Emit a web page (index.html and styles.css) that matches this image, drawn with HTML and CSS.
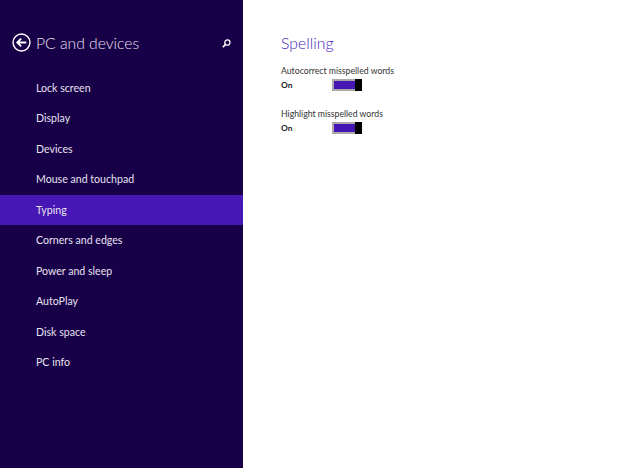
FILE: index.html
```html
<!DOCTYPE html>
<html lang="en">
<head>
    <meta charset="UTF-8">
    <title>PC and devices</title>
    <link rel="stylesheet" href="styles.css">
</head>
<body>
    <nav class="sidebar">
        <header class="side-head">
            <svg class="back" width="19" height="19" viewBox="0 0 20 20">
                <circle cx="10" cy="10" r="8.9" fill="none" stroke="#fff" stroke-width="1.5"/>
                <path d="M15 10H6M9.6 6L5.6 10L9.6 14" fill="none" stroke="#fff" stroke-width="2"/>
            </svg>
            <h1>PC and devices</h1>
            <svg class="search" width="9" height="9" viewBox="0 0 10 10">
                <circle cx="6" cy="4" r="2.9" fill="none" stroke="#fff" stroke-width="1.4"/>
                <path d="M4 6L1 9" stroke="#fff" stroke-width="1.8"/>
            </svg>
        </header>
        <ul class="menu">
            <li>Lock screen</li>
            <li>Display</li>
            <li>Devices</li>
            <li>Mouse and touchpad</li>
            <li class="active">Typing</li>
            <li>Corners and edges</li>
            <li>Power and sleep</li>
            <li>AutoPlay</li>
            <li>Disk space</li>
            <li>PC info</li>
        </ul>
    </nav>
    <main class="content">
        <h2>Spelling</h2>
        <div class="setting">
            <div class="label">Autocorrect misspelled words</div>
            <div class="row">
                <span class="state">On</span>
                <span class="toggle"><span class="fill"></span><span class="thumb"></span></span>
            </div>
        </div>
        <div class="setting">
            <div class="label">Highlight misspelled words</div>
            <div class="row">
                <span class="state">On</span>
                <span class="toggle"><span class="fill"></span><span class="thumb"></span></span>
            </div>
        </div>
    </main>
</body>
</html>
```

FILE: styles.css
```css
body {
    margin: 0;
    width: 624px;
    height: 468px;
    display: flex;
    overflow: hidden;
    background: #fff;
    font-family: Lato, "Open Sans", sans-serif;
}
.sidebar {
    width: 243px;
    height: 468px;
    background: #180048;
    color: #fff;
}
.side-head {
    height: 73px;
    box-sizing: border-box;
    padding: 33px 12px 0 12px;
    display: flex;
    align-items: flex-start;
}
.side-head h1 {
    margin: 0 0 0 5px;
    font-size: 15.7px;
    line-height: 20px;
    font-weight: 300;
    color: #e4e0ee;
    flex: 1;
}
.search {
    margin-top: 6px;
}
.menu {
    list-style: none;
    margin: 0;
    padding: 0;
}
.menu li {
    height: 30.45px;
    line-height: 30px;
    padding-left: 36px;
    font-size: 10.6px;
    color: #e6e2ef;
}
.menu .active {
    background: #4617b4;
}
.content {
    padding: 33px 0 0 38px;
    color: #333;
}
.content h2 {
    margin: 0 0 11px;
    font-size: 15.8px;
    line-height: 20px;
    font-weight: 300;
    color: #4722bb;
}
.setting {
    margin-bottom: 14.5px;
}
.label {
    font-size: 8.7px;
    line-height: 14px;
}
.row {
    display: flex;
    align-items: center;
    height: 14px;
}
.state {
    width: 51px;
    font-size: 8.4px;
    font-weight: 700;
    color: #222;
}
.toggle {
    width: 30px;
    height: 12px;
    box-sizing: border-box;
    border: 2px solid #a9a9a9;
    border-right: 0;
    display: flex;
}
.fill {
    flex: 1;
    background: #4617b4;
}
.thumb {
    width: 7px;
    margin: -2px 0;
    background: #000;
}
```
